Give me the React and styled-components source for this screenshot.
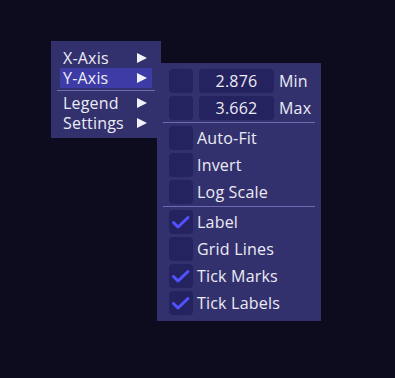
import React from "react";
import styled, { createGlobalStyle } from "styled-components";

const GlobalStyle = createGlobalStyle`
  html, body {
    margin: 0;
    padding: 0;
    background: #0d0c1f;
  }
  body {
    font-family: "Open Sans", "DejaVu Sans", sans-serif;
  }
`;

const Page = styled.div`
  width: 395px;
  height: 378px;
  padding: 41px 0 0 51px;
  box-sizing: border-box;
  background: #0d0c1f;
  color: #ecebf5;
  font-size: 16px;
  letter-spacing: 0.2px;
`;

const MenuAnchor = styled.div`
  position: relative;
  width: 110px;
`;

const Menu = styled.div`
  display: flex;
  flex-direction: column;
  width: 110px;
  box-sizing: border-box;
  padding: 7px 9px 5px;
  background: #33316d;
`;

const MenuItem = styled.div`
  display: flex;
  align-items: center;
  justify-content: space-between;
  height: 20px;
  padding: 0 5px 0 3px;
  background: ${(p) => (p.$active ? "#3d3ba6" : "transparent")};
  line-height: 20px;
`;

const Arrow = styled.span`
  width: 0;
  height: 0;
  border-top: 5px solid transparent;
  border-bottom: 5px solid transparent;
  border-left: 10px solid #f2f2fa;
`;

const MenuRule = styled.div`
  height: 1px;
  margin: 2px -3px 2px -3px;
  background: #6d6bb3;
`;

const SubMenu = styled.div`
  position: absolute;
  left: 106px;
  top: 22px;
  width: 164px;
  box-sizing: border-box;
  padding: 6px;
  background: #33316d;
  display: flex;
  flex-direction: column;
  gap: 3px;
`;

const Row = styled.div`
  display: flex;
  align-items: center;
  height: 24px;
  padding-left: 6px;
  gap: 4px;
`;

const Box = styled.div`
  width: 24px;
  height: 24px;
  border-radius: 4px;
  background: #25235f;
  flex: none;
  display: flex;
  align-items: center;
  justify-content: center;
`;

const Field = styled.div`
  width: 75px;
  height: 24px;
  margin-left: 2px;
  border-radius: 4px;
  background: #25235f;
  display: flex;
  align-items: center;
  justify-content: center;
`;

const FieldLabel = styled.span`
  margin-left: 1px;
`;

const SubRule = styled.div`
  height: 1px;
  margin: -1px 0 0;
  background: #6d6bb3;
`;

const Check = () => (
  <svg width="24" height="24" viewBox="0 0 24 24">
    <polyline
      points="4.5,12.5 9,17 19,7.5"
      fill="none"
      stroke="#5252ff"
      strokeWidth="3"
      strokeLinecap="round"
      strokeLinejoin="round"
    />
  </svg>
);

const CheckRow = ({ checked, children }) => (
  <Row>
    <Box>{checked ? <Check /> : null}</Box>
    <span>{children}</span>
  </Row>
);

export default function App() {
  return (
    <>
      <GlobalStyle />
      <Page>
        <MenuAnchor>
          <Menu>
            <MenuItem>
              X-Axis <Arrow />
            </MenuItem>
            <MenuItem $active>
              Y-Axis <Arrow />
            </MenuItem>
            <MenuRule />
            <MenuItem>
              Legend <Arrow />
            </MenuItem>
            <MenuItem>
              Settings <Arrow />
            </MenuItem>
          </Menu>
          <SubMenu>
            <Row>
              <Box />
              <Field>2.876</Field>
              <FieldLabel>Min</FieldLabel>
            </Row>
            <Row>
              <Box />
              <Field>3.662</Field>
              <FieldLabel>Max</FieldLabel>
            </Row>
            <SubRule />
            <CheckRow>Auto-Fit</CheckRow>
            <CheckRow>Invert</CheckRow>
            <CheckRow>Log Scale</CheckRow>
            <SubRule />
            <CheckRow checked>Label</CheckRow>
            <CheckRow>Grid Lines</CheckRow>
            <CheckRow checked>Tick Marks</CheckRow>
            <CheckRow checked>Tick Labels</CheckRow>
          </SubMenu>
        </MenuAnchor>
      </Page>
    </>
  );
}
